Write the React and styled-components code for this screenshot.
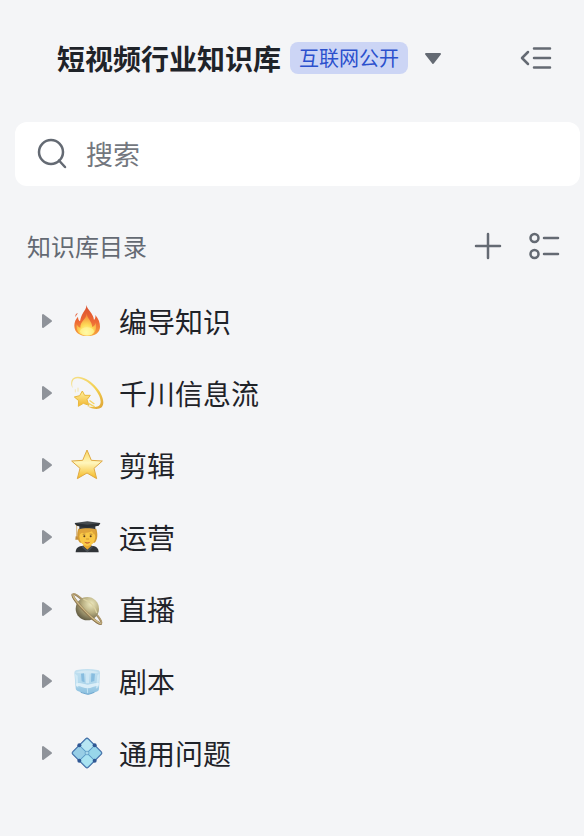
import React from "react";
import styled, { createGlobalStyle } from "styled-components";

const GlobalStyle = createGlobalStyle`
  * {
    box-sizing: border-box;
  }
  body {
    margin: 0;
    background-color: #f4f5f7;
    font-family: "Noto Sans CJK SC", "Liberation Sans", sans-serif;
    color: #1f2329;
  }
  button, input {
    font-family: inherit;
    color: inherit;
  }
`;

const Fire = () => (
  <svg viewBox="0 0 96 96" aria-hidden="true">
    <defs>
      <linearGradient id="fire_out" x1="0" y1="0" x2="0" y2="1">
        <stop offset="0" stopColor="#d9502f" />
        <stop offset="0.55" stopColor="#ee6a35" />
        <stop offset="1" stopColor="#f7a63c" />
      </linearGradient>
      <radialGradient id="fire_in" cx="0.5" cy="0.85" r="0.75">
        <stop offset="0" stopColor="#fffbb0" />
        <stop offset="0.45" stopColor="#fedb58" />
        <stop offset="1" stopColor="#f58a38" />
      </radialGradient>
    </defs>
    <path
      d="M46 0C49 15 67 24 69 45c4-4 5-8 4-15 10 12 14 23 14 35C87 83 72 93 49 93S10 82 10 62c0-11 4-20 11-27 0 7 2 11 6 14 2-10 4-17 9-25C41 16 47 10 46 0z"
      fill="url(#fire_out)"
    />
    <path
      d="M47 25c1 15 16 24 17 41 6-3 9-7 10-13 5 20-3 39-25 39S14 80 17 58c3 6 6 9 11 10-1-19 19-25 19-43z"
      fill="url(#fire_in)"
    />
    <path d="M20 24c0 4-6 6-5 12-4-4-1-10 5-12z" fill="#e35b34" />
    <ellipse cx="48" cy="79" rx="21" ry="12" fill="#fff8a0" opacity="0.6" />
  </svg>
);

const Dizzy = () => (
  <svg viewBox="0 0 96 96" aria-hidden="true">
    <defs>
      <linearGradient id="dizzy_ring" x1="0" y1="0" x2="1" y2="1">
        <stop offset="0" stopColor="#f5e08a" />
        <stop offset="0.6" stopColor="#f3cf4d" />
        <stop offset="1" stopColor="#dda236" />
      </linearGradient>
      <linearGradient id="dizzy_star" x1="0" y1="0" x2="0" y2="1">
        <stop offset="0" stopColor="#fff1a0" />
        <stop offset="1" stopColor="#f1b62e" />
      </linearGradient>
    </defs>
    <path
      d="M5 34C-4 16 1-1 21-1c33 0 76 44 76 77 0 20-16 23-35 18l-14-6c24 5 41 2 41-14C89 47 48 4 20 4 5 4 1 15 5 34z"
      fill="url(#dizzy_ring)"
    />
    <path
      d="M34 42l7 13 17 0-10 13 6 17-17-6-15 9 1-17-13-11 16-4z"
      fill="url(#dizzy_star)"
      stroke="#eab83c"
      strokeWidth="3"
      strokeLinejoin="round"
    />
    <path d="M13 37v9M21 32v12" stroke="#f7df86" strokeWidth="2" />
    <path d="M54 80l16 9M57 71l12 9" stroke="#f5d365" strokeWidth="4" strokeLinecap="round" />
  </svg>
);

const Star = () => (
  <svg viewBox="0 0 96 96" aria-hidden="true">
    <defs>
      <linearGradient id="star_fill" x1="0" y1="0" x2="0" y2="1">
        <stop offset="0" stopColor="#fbd75c" />
        <stop offset="0.45" stopColor="#fff6bd" />
        <stop offset="1" stopColor="#f5b91f" />
      </linearGradient>
    </defs>
    <path
      d="M48 3l13 31 33 2-25 22 8 31-29-17-29 17 8-31L2 36l33-2z"
      fill="url(#star_fill)"
      stroke="#dfaa45"
      strokeWidth="3"
      strokeLinejoin="round"
    />
  </svg>
);

const Graduate = () => (
  <svg viewBox="0 0 96 96" aria-hidden="true">
    <path d="M14 94c0-14 9-19 23-20h24c14 1 22 7 22 20z" fill="#303438" />
    <path d="M37 68h24v8L49 86 37 76z" fill="#e8a92f" />
    <path d="M36 74l13 14 13-14 5 3-18 17-18-17z" fill="#484e53" />
    <path d="M22 23h54c5 17 4 33-5 42H27c-9-10-11-25-5-42z" fill="#d39a32" />
    <ellipse cx="49" cy="47" rx="24" ry="28" fill="#f9c846" />
    <path d="M25 42c-2-9 0-17 5-20h38c6 5 7 12 5 20-5-2-8-6-10-11-10 5-27 6-30 4-3 2-5 4-8 7z" fill="#dfa43a" />
    <circle cx="40" cy="46" r="3" fill="#563a20" />
    <circle cx="59" cy="46" r="3" fill="#563a20" />
    <path d="M35 40l8-1M56 39l8 1" stroke="#96652a" strokeWidth="2" />
    <path d="M46 54h7" stroke="#c28629" strokeWidth="2" strokeLinecap="round" />
    <path d="M40 62c6 3 12 3 18 0-4 7-14 7-18 0z" fill="#b64a2c" />
    <path d="M25 13h48v12c-12-4-36-4-48 0z" fill="#34393d" />
    <path d="M11 6l38-5 39 5-5 7-34 6-33-6z" fill="#454b4f" />
    <path d="M11 6l38 5 39-5-5 8-34 6-33-6z" fill="#292e32" />
    <path d="M17 12v35" stroke="#c28d3b" strokeWidth="2" />
    <path d="M14 46h6l2 10H13z" fill="#c28d3b" />
  </svg>
);

const Saturn = () => (
  <svg viewBox="0 0 96 96" aria-hidden="true">
    <defs>
      <radialGradient id="saturn_ball" cx="0.66" cy="0.3" r="0.75">
        <stop offset="0" stopColor="#eeeac1" />
        <stop offset="0.5" stopColor="#b8ae80" />
        <stop offset="1" stopColor="#615b43" />
      </radialGradient>
    </defs>
    <g transform="rotate(46 48 48)">
      <ellipse cx="48" cy="48" rx="61" ry="10" fill="none" stroke="#9d8560" strokeWidth="5" />
    </g>
    <circle cx="49" cy="47" r="35" fill="url(#saturn_ball)" />
    <g transform="rotate(46 48 48)" fill="none">
      <path d="M19 35c18-9 40-9 58 0" stroke="#dbd2a2" strokeWidth="4" />
      <path d="M-13 48C-13 60 109 60 109 48" stroke="#8c7652" strokeWidth="8" />
      <path d="M-13 47C-13 59 109 59 109 47" stroke="#cdb984" strokeWidth="4" />
      <path d="M-13 48C-13 42 0 39 14 38M82 38c16 1 27 5 27 10" stroke="#b29d70" strokeWidth="4" />
    </g>
  </svg>
);

const Ice = () => (
  <svg viewBox="0 0 96 96" aria-hidden="true">
    <defs>
      <linearGradient id="ice_fill" x1="0" y1="0" x2="0" y2="1">
        <stop offset="0" stopColor="#c3e0f0" />
        <stop offset="0.5" stopColor="#b3d9ed" />
        <stop offset="1" stopColor="#8abfdf" />
      </linearGradient>
    </defs>
    <path
      d="M18 15c20-4 42-4 62 0 5 1 7 4 7 9l-3 47c0 5-3 7-8 9l-20 7c-4 1-8 1-12-1l-22-7c-5-2-8-5-8-10l-4-45c0-5 3-8 8-9z"
      fill="url(#ice_fill)"
    />
    <path d="M14 22c20-7 48-7 69 0-10 5-58 5-69 0z" fill="#d3e9f4" />
    <path d="M30 26l9-1 2 27-9-3zM61 25l11 1-2 22-10 3z" fill="#88bddf" />
    <path d="M44 23h12l-2 32h-9z" fill="#cfe8f5" />
    <path d="M12 26l8 6 2 36-6-4zM85 26l-3 40-7 5 4-40z" fill="#d5ecf7" opacity="0.8" />
    <path d="M15 56c12-5 24 3 35 3s22-7 34-4l-1 7c-12-1-22 8-33 8s-22-8-34-7z" fill="#e4f3fa" opacity="0.85" />
    <path d="M49 69l1 16" stroke="#c3e4f4" strokeWidth="3" />
    <path d="M29 82l17 5c3 1 7 1 10 0l14-5" fill="none" stroke="#6da6ce" strokeWidth="3" />
  </svg>
);

const Diamond = () => (
  <svg viewBox="0 0 96 96" aria-hidden="true">
    <g transform="rotate(45 48 48)">
      <rect x="15" y="15" width="66" height="66" rx="6" fill="#79bddf" stroke="#416ba4" strokeWidth="3" />
      <rect x="18" y="18" width="28" height="28" rx="4" fill="#b8e6f2" />
      <rect x="50" y="18" width="28" height="28" rx="4" fill="#98d6ea" />
      <rect x="18" y="50" width="28" height="28" rx="4" fill="#98cee6" />
      <rect x="50" y="50" width="28" height="28" rx="4" fill="#a9e3f2" />
      <path d="M48 18v60M18 48h60" stroke="#5a90bd" strokeWidth="2" />
      <rect x="43" y="43" width="10" height="10" rx="3" fill="#a7d8ec" stroke="#5c96c1" strokeWidth="2" />
    </g>
    <g fill="#2f5794">
      <circle cx="25" cy="25" r="6" />
      <circle cx="71" cy="25" r="6" />
      <circle cx="25" cy="71" r="6" />
      <circle cx="71" cy="71" r="6" />
    </g>
  </svg>
);

const catalog = [
  { name: "编导知识", Icon: Fire },
  { name: "千川信息流", Icon: Dizzy },
  { name: "剪辑", Icon: Star },
  { name: "运营", Icon: Graduate },
  { name: "直播", Icon: Saturn },
  { name: "剧本", Icon: Ice },
  { name: "通用问题", Icon: Diamond },
];

const App = () => {
  const [keyword, setKeyword] = React.useState("");
  return (
    <Sidebar>
      <GlobalStyle />
      <Header>
        <Title>短视频行业知识库</Title>
        <Badge>互联网公开</Badge>
        <IconButton type="button" aria-label="切换知识库">
          <svg width="32" height="32" viewBox="0 0 32 32">
            <path d="M9 12h14l-7 9z" fill="#646a73" stroke="#646a73" strokeWidth="2" strokeLinejoin="round" />
          </svg>
        </IconButton>
        <IconButton type="button" aria-label="收起侧栏" $end>
          <svg width="32" height="32" viewBox="0 0 32 32" {...line}>
            <path d="M8 10l-6 6 6 6M14 6.5h16M14 16h16M14 25.5h16" />
          </svg>
        </IconButton>
      </Header>
      <SearchBox htmlFor="search">
        <svg width="32" height="32" viewBox="0 0 32 32" aria-hidden="true" {...line}>
          <circle cx="15" cy="14" r="12" />
          <path d="M23 22.5l6 6.5" />
        </svg>
        <input
          id="search"
          type="text"
          name="search"
          aria-label="搜索"
          autoComplete="off"
          placeholder="搜索"
          value={keyword}
          onChange={(e) => setKeyword(e.target.value)}
        />
      </SearchBox>
      <CatalogHeader>
        <h2>知识库目录</h2>
        <IconButton type="button" aria-label="新建">
          <svg width="32" height="32" viewBox="0 0 32 32" {...line}>
            <path d="M16 4v24M4 16h24" />
          </svg>
        </IconButton>
        <IconButton type="button" aria-label="目录选项">
          <svg width="32" height="32" viewBox="0 0 32 32" {...line}>
            <circle cx="6.5" cy="8" r="4" />
            <circle cx="6.5" cy="24" r="4" />
            <path d="M16 8h14M16 24h14" />
          </svg>
        </IconButton>
      </CatalogHeader>
      <Catalog>
        {catalog.map(({ name, Icon }) => (
          <li key={name}>
            <CatalogItem type="button" aria-expanded="false">
              <Arrow viewBox="0 0 12 16" aria-hidden="true">
                <path d="M2 2v12l8-6z" />
              </Arrow>
              <Emoji>
                <Icon />
              </Emoji>
              {name}
            </CatalogItem>
          </li>
        ))}
      </Catalog>
    </Sidebar>
  );
};

export default App;

const line = {
  fill: "none",
  stroke: "#646a73",
  strokeWidth: "2.5",
  strokeLinecap: "round",
  strokeLinejoin: "round",
};

const Sidebar = styled.aside`
  width: 100%;
  min-height: 100vh;
  padding: 26px 0 32px;
  background-color: #f4f5f7;
`;

const Header = styled.header`
  display: flex;
  align-items: center;
  min-height: 64px;
  padding: 0 32px 0 57px;
`;

const Title = styled.h1`
  margin: 0;
  font-size: 28px;
  line-height: 40px;
  font-weight: 700;
  white-space: nowrap;
`;

const Badge = styled.span`
  margin: 0 9px;
  padding: 0 9px;
  border-radius: 8px;
  background-color: #ccd5f5;
  color: #2b50cd;
  font-size: 20px;
  line-height: 32px;
  white-space: nowrap;
`;

const IconButton = styled.button`
  display: flex;
  flex-shrink: 0;
  margin-left: ${({ $end }) => ($end ? "auto" : "0")};
  padding: 0;
  border: none;
  background: none;
  cursor: pointer;
`;

const SearchBox = styled.label`
  display: flex;
  align-items: center;
  gap: 18px;
  height: 64px;
  margin: 32px 4px 0 15px;
  padding: 0 20px 0 21px;
  border-radius: 12px;
  background-color: white;
  cursor: text;
  input {
    flex: 1;
    min-width: 0;
    padding: 0;
    border: none;
    outline: none;
    background: none;
    font-size: 27px;
    line-height: 40px;
    &::placeholder {
      color: #73777e;
      opacity: 1;
    }
  }
`;

const CatalogHeader = styled.div`
  display: flex;
  align-items: center;
  gap: 24px;
  min-height: 48px;
  margin-top: 36px;
  padding: 0 24px 0 27px;
  h2 {
    flex: 1;
    margin: 0;
    color: #646a73;
    font-size: 24px;
    line-height: 32px;
    font-weight: 400;
  }
`;

const Catalog = styled.ul`
  margin: 15px 0 0;
  padding: 0;
  list-style: none;
`;

const CatalogItem = styled.button`
  display: flex;
  align-items: center;
  width: 100%;
  min-height: 72px;
  padding: 0 24px 0 41px;
  border: none;
  background: none;
  font-size: 28px;
  line-height: 40px;
  text-align: left;
  cursor: pointer;
`;

const Arrow = styled.svg`
  width: 12px;
  height: 16px;
  fill: #8f939a;
  stroke: #8f939a;
  stroke-width: 2px;
  stroke-linejoin: round;
`;

const Emoji = styled.span`
  display: flex;
  margin: 0 16px 0 18px;
  svg {
    width: 32px;
    height: 32px;
    overflow: visible;
  }
`;
